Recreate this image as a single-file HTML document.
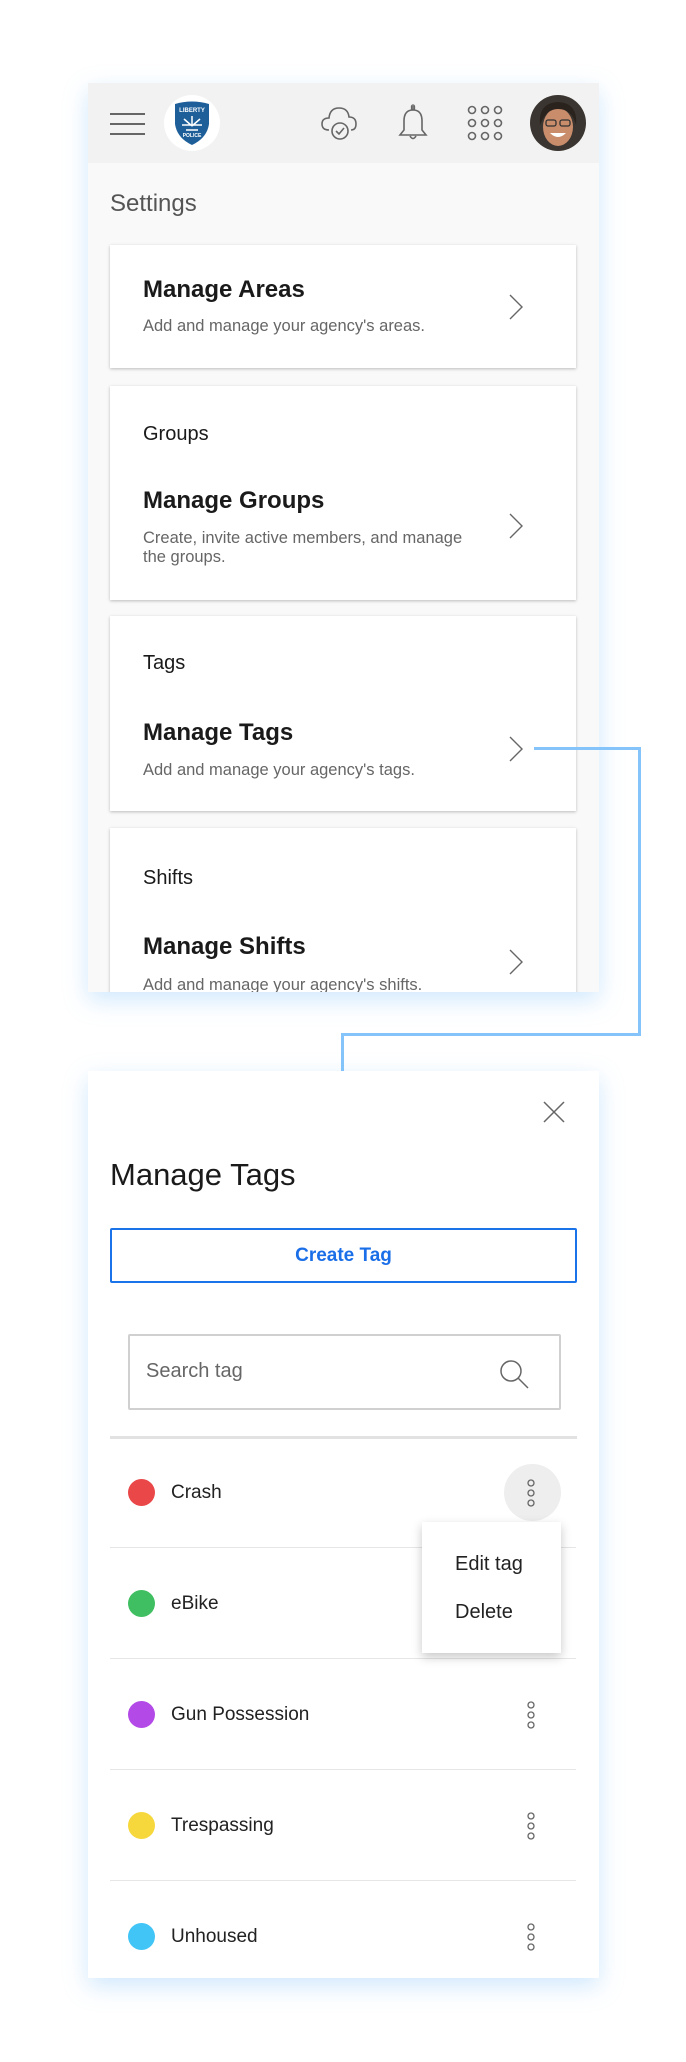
<!DOCTYPE html>
<html><head><meta charset="utf-8"><style>
*{margin:0;padding:0;box-sizing:border-box}
body{width:686px;height:2062px;background:#fff;font-family:"Liberation Sans",sans-serif;position:relative;overflow:hidden}
.abs{position:absolute}
.panel{position:absolute;left:88px;width:511px;box-shadow:0 8px 22px rgba(120,190,250,0.35);overflow:hidden}
.card{position:absolute;left:22px;width:466px;background:#fff;box-shadow:0 1px 3px rgba(0,0,0,0.25)}
.t{position:absolute;white-space:nowrap;line-height:1}
.h{font-weight:bold;font-size:24px;color:#1a1a1a}
.d{font-size:16.5px;color:#666}
.s{font-size:20px;color:#1a1a1a}
.chev{position:absolute;left:398px}
.row{position:absolute;left:22px;width:466px;height:1px;background:#e6e6e6}
.dot{position:absolute;left:40px;width:27px;height:27px;border-radius:50%}
.lbl{position:absolute;left:83px;font-size:19px;color:#222;line-height:1}
.keb{position:absolute;left:437px}
</style></head><body>

<!-- top panel -->
<div class="panel" style="top:83px;height:909px;background:#f9f9f9">
  <div class="abs" style="left:0;top:0;width:511px;height:80px;background:#f2f2f2"></div>
  <div class="abs" style="left:22px;top:30px;width:35px;height:2px;background:#666"></div>
  <div class="abs" style="left:22px;top:40px;width:35px;height:2px;background:#666"></div>
  <div class="abs" style="left:22px;top:50px;width:35px;height:2px;background:#666"></div>
  <div class="abs" style="left:76px;top:12px;width:56px;height:56px;border-radius:50%;background:#fff"></div>
  <svg class="abs" style="left:84px;top:17px" width="40" height="46" viewBox="0 0 40 46">
    <path d="M3 4 Q20 -1 37 4 L37 24 Q35 38 20 45 Q5 38 3 24 Z" fill="#1e5f9a"/>
    <text x="20" y="12" font-size="6" fill="#fff" text-anchor="middle" font-weight="bold" font-family="Liberation Sans">LIBERTY</text>
    <path d="M20 16 L20 26 M12 19 L20 26 M28 19 L20 26 M10 25 L30 25 M14 30 L26 30" stroke="#fff" stroke-width="1.5"/>
    <text x="20" y="37" font-size="5" fill="#fff" text-anchor="middle" font-weight="bold" font-family="Liberation Sans">POLICE</text>
  </svg>
  <svg class="abs" style="left:232px;top:20px" width="38" height="40" viewBox="0 0 38 40">
    <path d="M9 27 Q2 27 2 21 Q2 15 9 15 Q10 5 19 5 Q28 5 29 14 Q36 14 36 21 Q36 27 31 27" fill="none" stroke="#666" stroke-width="1.6"/>
    <circle cx="20" cy="28" r="8" fill="#f2f2f2" stroke="#666" stroke-width="1.6"/>
    <path d="M16 28 L19 31 L24 25" fill="none" stroke="#666" stroke-width="1.6"/>
  </svg>
  <svg class="abs" style="left:310px;top:20px" width="30" height="40" viewBox="0 0 30 40">
    <path d="M15 3 L15 7 M15 7 Q6 7 6 18 L6 27 L2 32 L28 32 L24 27 L24 18 Q24 7 15 7 Z" fill="none" stroke="#666" stroke-width="1.6"/>
    <path d="M12 33 Q15 38 18 33" fill="none" stroke="#666" stroke-width="1.6"/>
    <rect x="13.5" y="2" width="3" height="5" rx="1.5" fill="none" stroke="#666" stroke-width="1.3"/>
  </svg>
  <svg class="abs" style="left:378px;top:21px" width="38" height="38" viewBox="0 0 38 38">
    <g fill="none" stroke="#666" stroke-width="1.6">
      <circle cx="6" cy="6" r="3.5"/><circle cx="19" cy="6" r="3.5"/><circle cx="32" cy="6" r="3.5"/>
      <circle cx="6" cy="19" r="3.5"/><circle cx="19" cy="19" r="3.5"/><circle cx="32" cy="19" r="3.5"/>
      <circle cx="6" cy="32" r="3.5"/><circle cx="19" cy="32" r="3.5"/><circle cx="32" cy="32" r="3.5"/>
    </g>
  </svg>
  <svg class="abs" style="left:442px;top:12px" width="56" height="56" viewBox="0 0 56 56">
    <circle cx="28" cy="28" r="28" fill="#3a3530"/>
    <ellipse cx="28" cy="32" rx="15" ry="19" fill="#c98d6c"/>
    <path d="M10 30 Q8 8 28 7 Q48 8 46 30 Q42 14 28 14 Q16 14 10 30Z" fill="#2a221d"/>
    <rect x="16" y="25" width="10" height="6" rx="2" fill="none" stroke="#333" stroke-width="1.3"/>
    <rect x="30" y="25" width="10" height="6" rx="2" fill="none" stroke="#333" stroke-width="1.3"/>
    <path d="M20 38 Q28 46 36 38 Z" fill="#fff"/>
  </svg>

  <div class="t" style="left:22px;top:109px;font-size:24px;color:#555">Settings</div>

  <div class="card" style="top:162px;height:123px">
    <div class="t h" style="left:33px;top:33px">Manage Areas</div>
    <div class="t d" style="left:33px;top:73px">Add and manage your agency's areas.</div>
    <svg class="chev" style="top:48px" width="16" height="28"><path d="M2 2 L14 14 L2 26" fill="none" stroke="#666" stroke-width="1.4"/></svg>
  </div>
  <div class="card" style="top:303px;height:214px">
    <div class="t s" style="left:33px;top:38px">Groups</div>
    <div class="t h" style="left:33px;top:103px">Manage Groups</div>
    <div class="t d" style="left:33px;top:144px">Create, invite active members, and manage</div>
    <div class="t d" style="left:33px;top:163px">the groups.</div>
    <svg class="chev" style="top:126px" width="16" height="28"><path d="M2 2 L14 14 L2 26" fill="none" stroke="#666" stroke-width="1.4"/></svg>
  </div>
  <div class="card" style="top:533px;height:195px">
    <div class="t s" style="left:33px;top:37px">Tags</div>
    <div class="t h" style="left:33px;top:105px">Manage Tags</div>
    <div class="t d" style="left:33px;top:146px">Add and manage your agency's tags.</div>
    <svg class="chev" style="top:119px" width="16" height="28"><path d="M2 2 L14 14 L2 26" fill="none" stroke="#666" stroke-width="1.4"/></svg>
  </div>
  <div class="card" style="top:745px;height:200px">
    <div class="t s" style="left:33px;top:40px">Shifts</div>
    <div class="t h" style="left:33px;top:107px">Manage Shifts</div>
    <div class="t d" style="left:33px;top:149px">Add and manage your agency's shifts.</div>
    <svg class="chev" style="top:120px" width="16" height="28"><path d="M2 2 L14 14 L2 26" fill="none" stroke="#666" stroke-width="1.4"/></svg>
  </div>
</div>

<!-- connector -->
<div class="abs" style="left:534px;top:747px;width:107px;height:3px;background:#84c4fa"></div>
<div class="abs" style="left:638px;top:747px;width:3px;height:289px;background:#84c4fa"></div>
<div class="abs" style="left:341px;top:1033px;width:300px;height:3px;background:#84c4fa"></div>
<div class="abs" style="left:341px;top:1033px;width:3px;height:38px;background:#84c4fa"></div>

<!-- bottom panel -->
<div class="panel" style="top:1071px;height:907px;background:#fff">
  <svg class="abs" style="left:454px;top:29px" width="24" height="24"><path d="M2 2 L22 22 M22 2 L2 22" stroke="#666" stroke-width="1.5"/></svg>
  <div class="t" style="left:22px;top:88px;font-size:31px;color:#1a1a1a">Manage Tags</div>
  <div class="abs" style="left:22px;top:157px;width:467px;height:55px;border:2px solid #1a73e8;border-radius:2px;text-align:center;line-height:51px;color:#1a6ee8;font-size:19px;font-weight:bold">Create Tag</div>
  <div class="abs" style="left:40px;top:263px;width:433px;height:76px;border:2px solid #d0d0d0;border-radius:2px"></div>
  <div class="t" style="left:58px;top:290px;font-size:20px;color:#666">Search tag</div>
  <svg class="abs" style="left:410px;top:287px" width="34" height="34"><circle cx="13" cy="13" r="10" fill="none" stroke="#666" stroke-width="1.5"/><path d="M20 20 L30 30" stroke="#666" stroke-width="1.5"/></svg>
  <div class="abs" style="left:22px;top:365px;width:467px;height:3px;background:#e2e2e2"></div>

  <div class="dot" style="top:408px;background:#ea4748"></div>
  <div class="lbl" style="top:412px">Crash</div>
  <div class="abs" style="left:416px;top:393px;width:57px;height:57px;border-radius:50%;background:#eee"></div>
  <div class="row" style="top:476px"></div>
  <div class="dot" style="top:519px;background:#3fbf61"></div>
  <div class="lbl" style="top:523px">eBike</div>
  <div class="row" style="top:587px"></div>
  <div class="dot" style="top:630px;background:#b34ae8"></div>
  <div class="lbl" style="top:634px">Gun Possession</div>
  <div class="row" style="top:698px"></div>
  <div class="dot" style="top:741px;background:#f6d83c"></div>
  <div class="lbl" style="top:745px">Trespassing</div>
  <div class="row" style="top:809px"></div>
  <div class="dot" style="top:852px;background:#41c5f6"></div>
  <div class="lbl" style="top:856px">Unhoused</div>

  <svg class="keb" style="top:408px" width="12" height="28"><g fill="none" stroke="#666" stroke-width="1.3"><circle cx="6" cy="4" r="3"/><circle cx="6" cy="14" r="3"/><circle cx="6" cy="24" r="3"/></g></svg>
  <svg class="keb" style="top:630px" width="12" height="28"><g fill="none" stroke="#666" stroke-width="1.3"><circle cx="6" cy="4" r="3"/><circle cx="6" cy="14" r="3"/><circle cx="6" cy="24" r="3"/></g></svg>
  <svg class="keb" style="top:741px" width="12" height="28"><g fill="none" stroke="#666" stroke-width="1.3"><circle cx="6" cy="4" r="3"/><circle cx="6" cy="14" r="3"/><circle cx="6" cy="24" r="3"/></g></svg>
  <svg class="keb" style="top:852px" width="12" height="28"><g fill="none" stroke="#666" stroke-width="1.3"><circle cx="6" cy="4" r="3"/><circle cx="6" cy="14" r="3"/><circle cx="6" cy="24" r="3"/></g></svg>

  <div class="abs" style="left:334px;top:451px;width:139px;height:131px;background:#fff;box-shadow:0 4px 10px rgba(0,0,0,0.22)">
    <div class="t" style="left:33px;top:32px;font-size:20px;color:#222">Edit tag</div>
    <div class="t" style="left:33px;top:80px;font-size:20px;color:#222">Delete</div>
  </div>
</div>
</body></html>
